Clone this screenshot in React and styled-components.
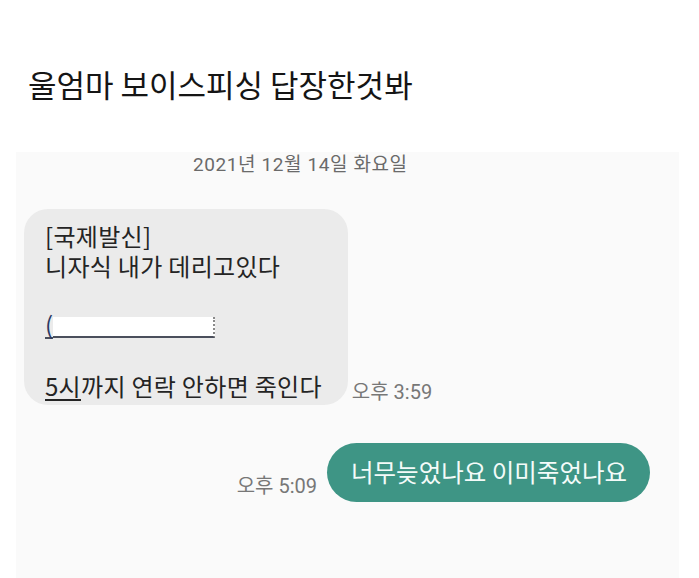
import React from 'react'
import styled, { createGlobalStyle } from 'styled-components'

const GlobalStyle = createGlobalStyle`
  html, body {
    margin: 0;
    padding: 0;
    background: #ffffff;
  }
  body {
    font-family: Roboto, "Noto Sans CJK KR", sans-serif;
  }
`;

const incoming = {
  lines: ['[국제발신]', '니자식 내가 데리고있다'],
  time: '오후 3:59',
};

const outgoing = {
  text: '너무늦었나요 이미죽었나요',
  time: '오후 5:09',
};

export default function App() {
  return (
    <Page>
      <GlobalStyle />
      <Title>울엄마 보이스피싱 답장한것봐</Title>
      <Screen>
        <DateLabel>2021년 12월 14일 화요일</DateLabel>
        <Row>
          <InBubble>
            {incoming.lines.map(line => (
              <Line key={line}>{line}</Line>
            ))}
            <Line />
            <Line>
              <LinkParen>(</LinkParen>
              <Redacted />
            </Line>
            <Line />
            <Line>
              <Underlined>5시</Underlined>까지 연락 안하면 죽인다
            </Line>
          </InBubble>
          <Time>{incoming.time}</Time>
        </Row>
        <Row $mine>
          <Time $mine>{outgoing.time}</Time>
          <OutBubble>{outgoing.text}</OutBubble>
        </Row>
      </Screen>
    </Page>
  );
}

//#region StyledComponents
const Page = styled.div`
  width: 699px;
  height: 578px;
  overflow: hidden;
  background: #ffffff;
  display: flex;
  flex-direction: column;
`;

const Title = styled.h1`
  margin: 66px 0 0 28px;
  font-family: "Noto Sans CJK KR", sans-serif;
  font-size: 31px;
  line-height: 36px;
  font-weight: 400;
  color: #151515;
`;

const Screen = styled.div`
  flex: 1;
  margin: 50px 20px 0 16px;
  background: #fafafa;
  display: flex;
  flex-direction: column;
  padding: 1px 0 0 8px;
`;

const DateLabel = styled.div`
  align-self: flex-start;
  margin-left: 169px;
  font-size: 19px;
  line-height: 24px;
  letter-spacing: 0.6px;
  color: #6a6a6a;
`;

const Row = styled.div`
  display: flex;
  align-items: flex-end;
  justify-content: ${p => (p.$mine ? 'flex-end' : 'flex-start')};
  gap: ${p => (p.$mine ? '10px' : '4px')};
  margin-top: ${p => (p.$mine ? '38px' : '32px')};
  padding-right: ${p => (p.$mine ? '29px' : '0')};
`;

const InBubble = styled.div`
  background: #ebebeb;
  border-radius: 24px;
  padding: 12px 26px 4px 21px;
  font-family: "Noto Sans CJK KR", sans-serif;
  font-size: 24px;
  letter-spacing: 0.3px;
  color: #242424;
`;

const Line = styled.div`
  height: 30px;
  line-height: 30px;
  white-space: nowrap;
`;

const LinkParen = styled.span`
  display: inline-block;
  color: #2b3a64;
  border-bottom: 2px solid #4a4f5c;
  line-height: 26px;
  vertical-align: top;
`;

const Redacted = styled.span`
  display: inline-block;
  width: 160px;
  height: 19px;
  margin-top: 6px;
  vertical-align: top;
  background: #ffffff;
  border-bottom: 2px solid #4a4f5c;
  border-right: 2px dotted #8a8a8a;
`;

const Underlined = styled.span`
  text-decoration: underline;
  text-decoration-thickness: 2px;
  text-underline-offset: 3px;
`;

const Time = styled.div`
  font-size: 20px;
  line-height: 24px;
  color: #777777;
  margin-bottom: ${p => (p.$mine ? '4px' : '1px')};
`;

const OutBubble = styled.div`
  background: #3e9585;
  color: #f4fbf9;
  border-radius: 30px;
  padding: 14px 23px 15px 24px;
  font-family: "Noto Sans CJK KR", sans-serif;
  font-size: 24.5px;
  line-height: 30px;
  white-space: nowrap;
`;
//#endregion
